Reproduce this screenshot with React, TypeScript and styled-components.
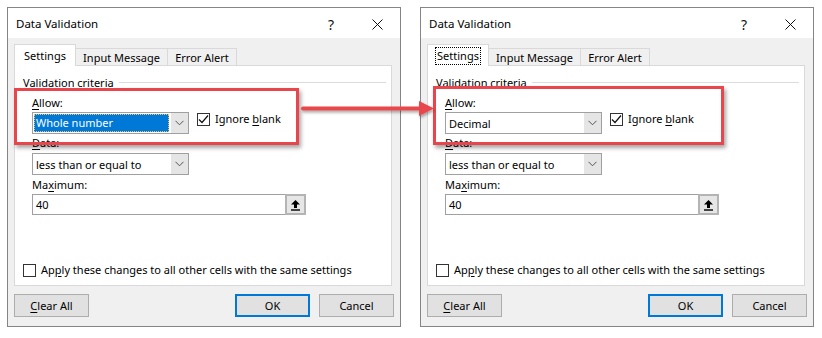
import React from "react";
import styled, { createGlobalStyle } from "styled-components";

const Global = createGlobalStyle`
  html, body { margin: 0; padding: 0; background: #ffffff; }
  body { font-family: "Noto Sans", "Open Sans", sans-serif; font-size: 11px; color: #000; }
`;

const Page = styled.div`
  position: relative;
  width: 822px;
  height: 338px;
  box-sizing: border-box;
  padding: 7px 0 0 7px;
  display: flex;
  gap: 19px;
  align-items: flex-start;
`;

const DialogBox = styled.div`
  position: relative;
  width: 394px;
  height: 320px;
  box-sizing: border-box;
  border: 1px solid #858585;
  background: #f0f0f0;
  display: flex;
  flex-direction: column;
`;

const TitleBar = styled.div`
  height: 30px;
  background: #ffffff;
  display: flex;
  align-items: center;
  padding-left: 8px;
`;

const Title = styled.div`
  flex: 1;
  font-size: 11.5px;
  line-height: 16px;
  padding-top: 2px;
`;

const TitleButton = styled.div`
  width: 46px;
  height: 30px;
  display: flex;
  align-items: center;
  justify-content: center;
  font-size: 14px;
  color: #111;
  padding-top: 2px;
  box-sizing: border-box;
`;

const Body = styled.div`
  padding: 7px 8px 0 6px;
  display: flex;
  flex-direction: column;
`;

const TabRow = styled.div`
  display: flex;
  align-items: flex-end;
  height: 21px;
  margin-bottom: -1px;
  position: relative;
  z-index: 1;
`;

const Tab = styled.div<{ $active?: boolean; $w: number }>`
  box-sizing: border-box;
  width: ${(p) => p.$w}px;
  height: ${(p) => (p.$active ? 22 : 18)}px;
  margin-left: -1px;
  &:first-child { margin-left: 0; }
  border: 1px solid #d9d9d9;
  border-bottom: ${(p) => (p.$active ? "none" : "1px solid #d9d9d9")};
  background: ${(p) => (p.$active ? "#ffffff" : "#f0f0f0")};
  display: flex;
  align-items: ${(p) => (p.$active ? "flex-start" : "center")};
  padding-top: ${(p) => (p.$active ? "3px" : "1px")};
  justify-content: center;
  line-height: 16px;
`;

const TabText = styled.span<{ $focus?: boolean }>`
  padding: 0 1px;
  outline: ${(p) => (p.$focus ? "1px dotted #000" : "none")};
  outline-offset: 0;
`;

const Panel = styled.div`
  box-sizing: border-box;
  width: 378px;
  height: 221px;
  background: #ffffff;
  border: 1px solid #d9d9d9;
  padding: 9px 5px 7px 0;
  display: flex;
  flex-direction: column;
`;

const Legend = styled.div`
  display: flex;
  align-items: center;
  padding-left: 8px;
  line-height: 16px;
  &::after {
    content: "";
    flex: 1;
    height: 1px;
    background: #dcdcdc;
    margin-left: 5px;
    margin-top: -2px;
  }
`;

const Fields = styled.div`
  padding-left: 17px;
  display: flex;
  flex-direction: column;
`;

const Label = styled.div<{ $mt: number }>`
  line-height: 16px;
  margin-top: ${(p) => p.$mt}px;
`;

const Row = styled.div<{ $mt: number }>`
  display: flex;
  align-items: flex-start;
  margin-top: ${(p) => p.$mt}px;
`;

const Combo = styled.div`
  box-sizing: border-box;
  width: 157px;
  height: 22px;
  border: 1px solid #a0a0a0;
  background: #fff;
  display: flex;
`;

const ComboText = styled.div<{ $selected?: boolean }>`
  flex: 1;
  margin: ${(p) => (p.$selected ? "1px 2px 1px 1px" : "0")};
  padding-left: ${(p) => (p.$selected ? "2px" : "3px")};
  padding-top: ${(p) => (p.$selected ? "0" : "1px")};
  background: ${(p) => (p.$selected ? "#0078d7" : "transparent")};
  color: ${(p) => (p.$selected ? "#fff" : "#000")};
  outline: ${(p) => (p.$selected ? "1px dotted #f3c45a" : "none")};
  outline-offset: -1px;
  display: flex;
  align-items: center;
  line-height: 16px;
`;

const DropButton = styled.div`
  width: 17px;
  background: #e5e5e5;
  display: flex;
  align-items: center;
  justify-content: center;
`;

const Check = styled.div`
  box-sizing: border-box;
  width: 13px;
  height: 13px;
  border: 1px solid #333;
  background: #fff;
  display: flex;
  align-items: center;
  justify-content: center;
`;

const CheckRow = styled.div<{ $ml: number; $mt: number }>`
  display: flex;
  align-items: center;
  gap: 5px;
  margin-left: ${(p) => p.$ml}px;
  margin-top: ${(p) => p.$mt}px;
  line-height: 16px;
`;

const InputBox = styled.div`
  box-sizing: border-box;
  width: 274px;
  height: 21px;
  border: 1px solid #a0a0a0;
  background: #fff;
  display: flex;
`;

const InputText = styled.div`
  flex: 1;
  padding-left: 3px;
  padding-top: 1px;
  display: flex;
  align-items: center;
  line-height: 16px;
`;

const UpButton = styled.div`
  box-sizing: border-box;
  width: 21px;
  margin: -1px -1px -1px 0;
  border: 2px solid #b4b4b4;
  background: #e6e6e6;
  display: flex;
  align-items: center;
  justify-content: center;
`;

const Spacer = styled.div`
  flex: 1;
`;

const ButtonRow = styled.div`
  display: flex;
  margin-top: 8px;
  margin-right: -2px;
`;

const Button = styled.div<{ $default?: boolean; $ml?: number }>`
  box-sizing: border-box;
  width: 75px;
  height: 23px;
  margin-left: ${(p) => p.$ml ?? 0}px;
  border: ${(p) => (p.$default ? "2px solid #0078d7" : "1px solid #adadad")};
  background: #e1e1e1;
  display: flex;
  align-items: center;
  justify-content: center;
  line-height: 16px;
  padding-top: 1px;
`;

const U = styled.span`
  text-decoration: underline;
  text-underline-offset: 2px;
`;

const Highlight = styled.div<{ $l: number; $t: number; $w: number; $h: number }>`
  position: absolute;
  left: ${(p) => p.$l}px;
  top: ${(p) => p.$t}px;
  width: ${(p) => p.$w}px;
  height: ${(p) => p.$h}px;
  box-sizing: border-box;
  border: 3px solid #e8464c;
  box-shadow: 2px 3px 4px rgba(0, 0, 0, 0.35);
  pointer-events: none;
  z-index: 5;
`;

const ArrowLayer = styled.svg`
  position: absolute;
  left: 0;
  top: 0;
  pointer-events: none;
  z-index: 10;
  overflow: visible;
`;

const Chevron = () => (
  <svg width="9" height="6" viewBox="0 0 9 6">
    <path d="M0.5 0.8 L4.5 4.8 L8.5 0.8" fill="none" stroke="#555" strokeWidth="1" />
  </svg>
);

const CheckMark = () => (
  <svg width="11" height="11" viewBox="0 0 11 11">
    <path d="M1 5.5 L4 8.5 L10 1.5" fill="none" stroke="#111" strokeWidth="1.2" />
  </svg>
);

const UpIcon = () => (
  <svg width="11" height="12" viewBox="0 0 11 12">
    <path d="M5.5 1 L10 5.5 L7 5.5 L7 9 L4 9 L4 5.5 L1 5.5 Z" fill="#000" />
    <rect x="1" y="10.3" width="9" height="1.4" fill="#000" />
  </svg>
);

const CloseIcon = () => (
  <svg width="11" height="11" viewBox="0 0 11 11">
    <path d="M0.5 0.5 L10.5 10.5 M10.5 0.5 L0.5 10.5" stroke="#111" strokeWidth="1" />
  </svg>
);

type DialogProps = {
  allow: string;
  selected?: boolean;
  tabFocus?: boolean;
  box: { l: number; t: number; w: number; h: number };
};

const Dialog = ({ allow, selected, tabFocus, box }: DialogProps) => (
  <DialogBox>
    <TitleBar>
      <Title>Data Validation</Title>
      <TitleButton>?</TitleButton>
      <TitleButton>
        <CloseIcon />
      </TitleButton>
    </TitleBar>
    <Body>
      <TabRow>
        <Tab $active $w={62}>
          <TabText $focus={tabFocus}>Settings</TabText>
        </Tab>
        <Tab $w={93}>Input Message</Tab>
        <Tab $w={70}>Error Alert</Tab>
      </TabRow>
      <Panel>
        <Legend>Validation criteria</Legend>
        <Fields>
          <Label $mt={4}>
            <U>A</U>llow:
          </Label>
          <Row $mt={1}>
            <Combo>
              <ComboText $selected={selected}>{allow}</ComboText>
              <DropButton>
                <Chevron />
              </DropButton>
            </Combo>
            <CheckRow $ml={8} $mt={-1}>
              <Check>
                <CheckMark />
              </Check>
              <span>
                Ignore <U>b</U>lank
              </span>
            </CheckRow>
          </Row>
          <Label $mt={1}>
            <U>D</U>ata:
          </Label>
          <Row $mt={2}>
            <Combo>
              <ComboText>less than or equal to</ComboText>
              <DropButton>
                <Chevron />
              </DropButton>
            </Combo>
          </Row>
          <Label $mt={2}>
            Ma<U>x</U>imum:
          </Label>
          <Row $mt={1}>
            <InputBox>
              <InputText>40</InputText>
              <UpButton>
                <UpIcon />
              </UpButton>
            </InputBox>
          </Row>
        </Fields>
        <Spacer />
        <CheckRow $ml={8} $mt={0}>
          <Check />
          <span>
            Ap<U>p</U>ly these changes to all other cells with the same settings
          </span>
        </CheckRow>
      </Panel>
      <ButtonRow>
        <Button>
          <span>
            <U>C</U>lear All
          </span>
        </Button>
        <Spacer />
        <Button $default>OK</Button>
        <Button $ml={9}>Cancel</Button>
      </ButtonRow>
    </Body>
    <Highlight $l={box.l} $t={box.t} $w={box.w} $h={box.h} />
  </DialogBox>
);

export default function App() {
  return (
    <>
      <Global />
      <Page>
        <Dialog allow="Whole number" selected box={{ l: 6, t: 80, w: 285, h: 57 }} />
        <Dialog allow="Decimal" tabFocus box={{ l: 12, t: 78, w: 291, h: 59 }} />
        <ArrowLayer width="822" height="338">
          <defs>
            <filter id="sh" x="-10%" y="-50%" width="120%" height="200%">
              <feDropShadow dx="1" dy="2" stdDeviation="1.5" floodColor="#000" floodOpacity="0.35" />
            </filter>
          </defs>
          <g filter="url(#sh)">
            <line x1="303" y1="108.5" x2="421" y2="108.5" stroke="#e8464c" strokeWidth="4" strokeLinecap="round" />
            <polygon points="419,101 434,108.5 419,116" fill="#e8464c" />
          </g>
        </ArrowLayer>
      </Page>
    </>
  );
}
